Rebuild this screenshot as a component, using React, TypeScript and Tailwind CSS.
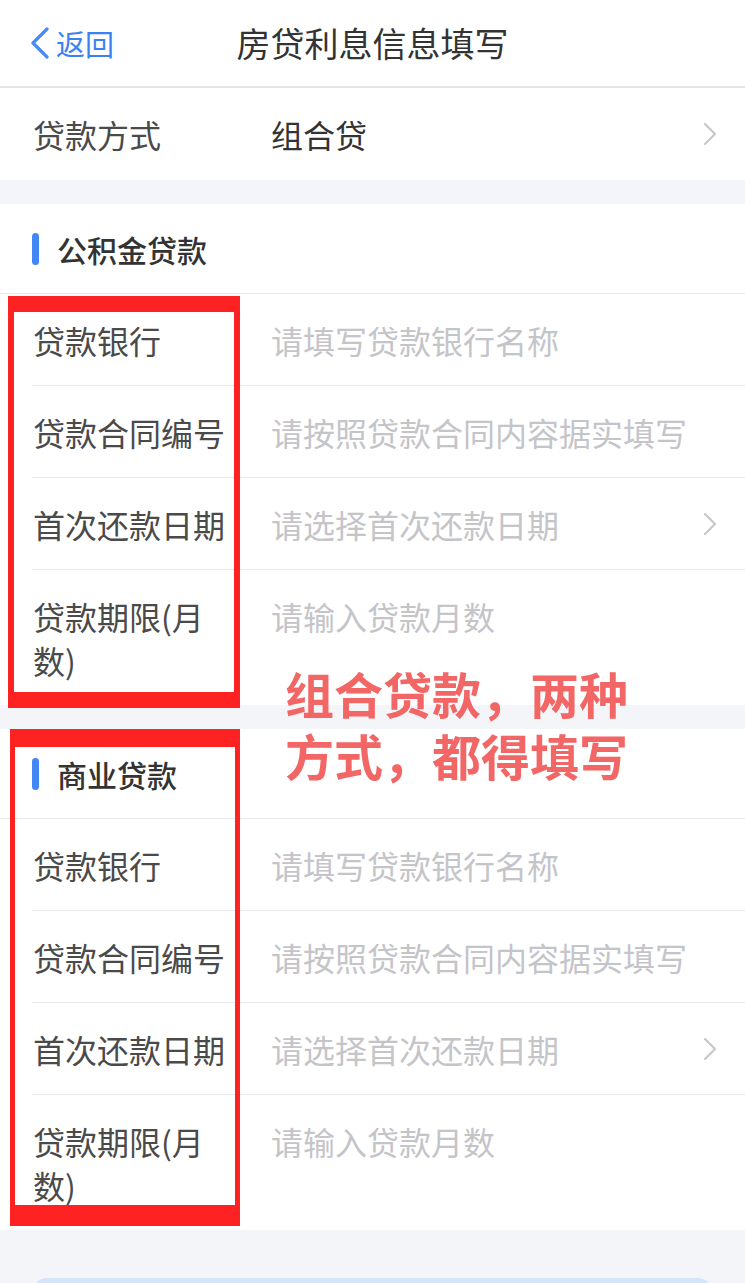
import React from "react";

const font = { fontFamily: '"Noto Sans CJK SC", "Noto Sans", sans-serif' };

function ChevronRight() {
  return (
    <svg width="14" height="24" viewBox="0 0 14 24" className="shrink-0">
      <path d="M2 2 L12 12 L2 22" fill="none" stroke="#c7c7cc" strokeWidth="2.2" strokeLinecap="round" strokeLinejoin="round" />
    </svg>
  );
}

type Row = { label: string; placeholder: string; arrow?: boolean };

const rows: Row[] = [
  { label: "贷款银行", placeholder: "请填写贷款银行名称" },
  { label: "贷款合同编号", placeholder: "请按照贷款合同内容据实填写" },
  { label: "首次还款日期", placeholder: "请选择首次还款日期", arrow: true },
  { label: "贷款期限(月数)", placeholder: "请输入贷款月数" },
];

function Section({ title }: { title: string }) {
  return (
    <div className="bg-white">
      <div className="h-[90px] flex items-center pl-[32px] border-b border-[#e8e8ea]">
        <div className="w-[7px] h-[32px] rounded-full bg-[#4287f5]" />
        <div className="ml-[18px] text-[30px] font-medium text-[#333333] leading-none">{title}</div>
      </div>
      {rows.map((r, i) => (
        <div key={r.label} className="pl-[32px]">
          <div
            className={`flex items-start pr-[28px] ${
              i < rows.length - 1 ? "pt-[24px] pb-[23px] border-b border-[#e8e8ea]" : "pt-[24px] pb-[23px]"
            }`}
          >
            <div className="w-[239px] pl-[1px] pr-[40px] text-[32px] leading-[44px] text-[#4a4a4a] break-all">{r.label}</div>
            <div className="flex-1 text-[32px] leading-[44px] text-[#c4c4c9] whitespace-nowrap">{r.placeholder}</div>
            {r.arrow && (
              <div className="h-[44px] flex items-center">
                <ChevronRight />
              </div>
            )}
          </div>
        </div>
      ))}
    </div>
  );
}

export default function App() {
  return (
    <div className="relative w-[745px] h-[1283px] overflow-hidden bg-[#f4f5f8]" style={font}>
      {/* Header */}
      <div className="h-[88px] bg-white border-b-2 border-[#e6e6e8] grid grid-cols-[1fr_auto_1fr] items-center">
        <div className="flex items-center pl-[30px] text-[#3d80f4]">
          <svg width="20" height="32" viewBox="0 0 20 32" className="shrink-0">
            <path d="M17 2 L3 16 L17 30" fill="none" stroke="#4a8af4" strokeWidth="3.2" strokeLinecap="round" strokeLinejoin="round" />
          </svg>
          <span className="ml-[6px] text-[29px] leading-none">返回</span>
        </div>
        <div className="text-[34px] text-[#333333] leading-none">房贷利息信息填写</div>
        <div />
      </div>

      {/* Loan type */}
      <div className="h-[92px] bg-white flex items-center pl-[33px] pr-[28px]">
        <div className="w-[238px] text-[32px] text-[#4a4a4a]">贷款方式</div>
        <div className="flex-1 text-[32px] text-[#333333]">组合贷</div>
        <ChevronRight />
      </div>

      <div className="h-[24px]" />
      <Section title="公积金贷款" />
      <div className="h-[24px]" />
      <Section title="商业贷款" />

      <div className="h-[48px]" />
      <div className="mx-[33px] h-[90px] rounded-[14px] bg-[#d4e5fa]" />

      {/* Annotation overlays */}
      <div className="absolute left-[8px] top-[296px] w-[232px] h-[412px] border-x-[6px] border-y-[16px] border-[#fe2222]" />
      <div className="absolute left-[10px] top-[729px] w-[230px] h-[497px] border-x-[5px] border-t-[18px] border-b-[21px] border-[#fe2222]" />
      <div className="absolute left-[285px] top-[662px] text-[49px] font-bold leading-[62px] text-[#f36666] whitespace-nowrap">
        组合贷款，两种
        <br />
        方式，都得填写
      </div>
    </div>
  );
}
